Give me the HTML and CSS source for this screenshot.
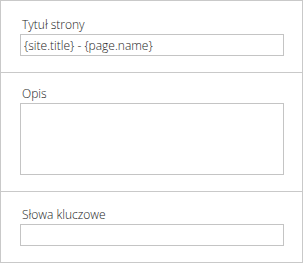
FILE: index.html
```html
<!DOCTYPE html>
<html lang="pl">
<head>
  <meta charset="UTF-8">
  <title>Ustawienia strony</title>
  <link rel="stylesheet" href="styles.css">
</head>
<body>
  <div class="settings-box">
    <div class="field-row first">
      <label for="pageTitle">Tytuł strony</label>
      <input type="text" id="pageTitle" value="{site.title} - {page.name}">
    </div>
    <div class="field-row middle">
      <label for="pageDesc">Opis</label>
      <textarea id="pageDesc"></textarea>
    </div>
    <div class="field-row last">
      <label for="pageKeywords">Słowa kluczowe</label>
      <input type="text" id="pageKeywords">
    </div>
  </div>
</body>
</html>
```

FILE: styles.css
```css
body {
  margin: 0;
  font-family: "Open Sans", sans-serif;
  background-color: #fff;
}
.settings-box {
  width: 303px;
  height: 263px;
  box-sizing: border-box;
  border: 1px solid #c9c9c9;
  background-color: #fff;
}
.field-row {
  display: flex;
  flex-direction: column;
  padding: 16px 18px 16px 19px;
  border-bottom: 1px solid #c9c9c9;
}
.field-row.middle {
  padding-top: 13px;
}
.field-row.last {
  padding-top: 15px;
  border-bottom: none;
}
label {
  display: block;
  height: 17px;
  line-height: 16px;
  font-size: 12px;
  font-weight: 300;
  color: #222;
  padding-left: 2px;
}
input,
textarea {
  box-sizing: border-box;
  width: 264px;
  margin: 0;
  border: 1px solid #c4c4c4;
  border-radius: 0;
  font-family: "Open Sans", sans-serif;
  font-size: 12px;
  font-weight: 300;
  color: #222;
  background-color: #fff;
  outline: none;
}
input {
  height: 22px;
  padding: 0 3px;
}
textarea {
  height: 72px;
  resize: none;
}
```
